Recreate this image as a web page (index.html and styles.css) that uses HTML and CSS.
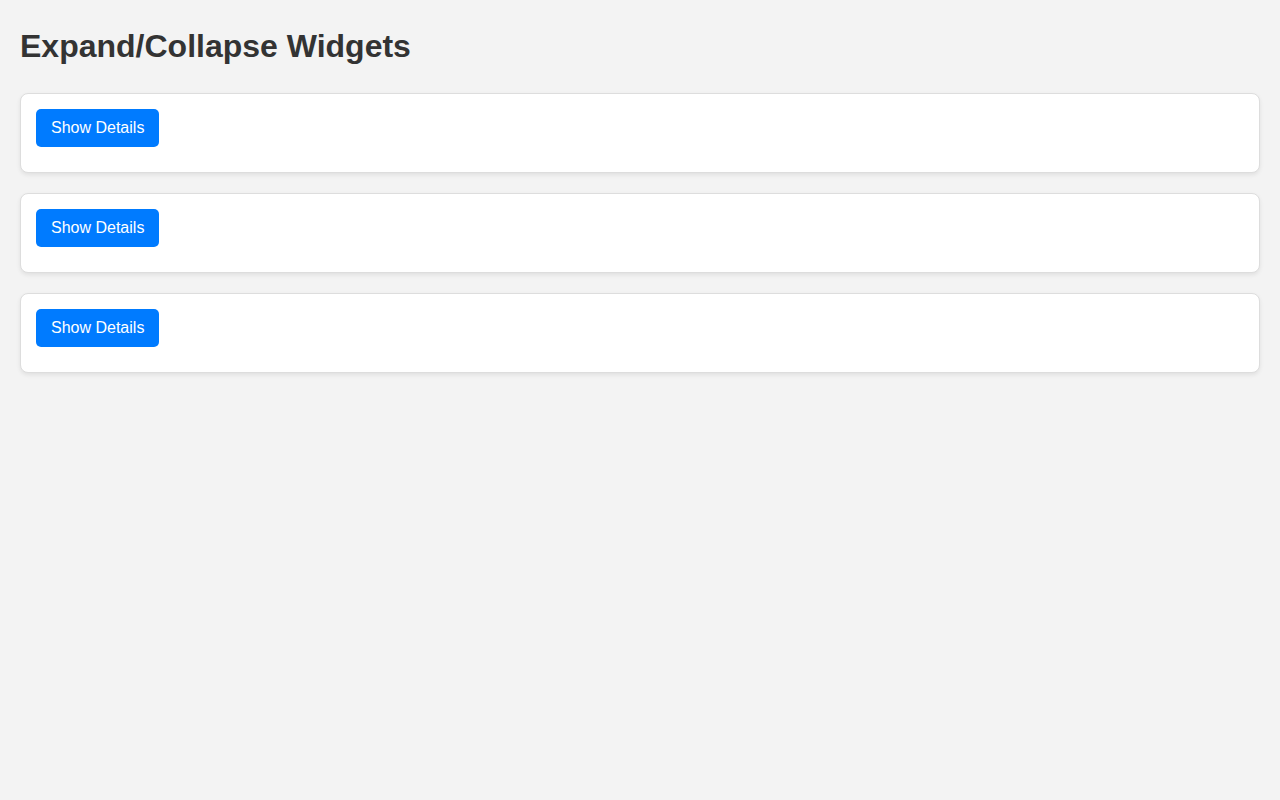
FILE: index.html
```html
<!DOCTYPE html>
<html lang="en">
<head>
<meta charset="utf-8">
<title>Expand/Collapse Widgets</title>
<link rel="stylesheet" href="styles.css">
</head>
<body>
  <h1 class="title">Expand/Collapse Widgets</h1>
  <div class="widget">
    <button class="toggle">Show Details</button>
    <div class="details"></div>
  </div>
  <div class="widget">
    <button class="toggle">Show Details</button>
    <div class="details"></div>
  </div>
  <div class="widget">
    <button class="toggle">Show Details</button>
    <div class="details"></div>
  </div>
</body>
</html>
```
FILE: styles.css
```css
html, body {
  background: #f3f3f3;
}
body {
  margin: 0;
  padding: 20px;
  font-family: "Liberation Sans", Arial, Helvetica, sans-serif;
  color: #333;
}
.title {
  font-size: 32px;
  font-weight: bold;
  color: #333;
  margin: 8px 0 28px;
}
.widget {
  background: #fff;
  border: 1px solid #ddd;
  border-radius: 8px;
  box-shadow: 0 2px 4px rgba(0, 0, 0, 0.08);
  padding: 15px;
  margin-bottom: 20px;
}
.toggle {
  display: block;
  background: #007bff;
  color: #fff;
  border: none;
  border-radius: 5px;
  padding: 10px 15px;
  font-family: "Liberation Sans", Arial, Helvetica, sans-serif;
  font-size: 16px;
  line-height: 18px;
  cursor: pointer;
}
.details {
  height: 10px;
}
```
